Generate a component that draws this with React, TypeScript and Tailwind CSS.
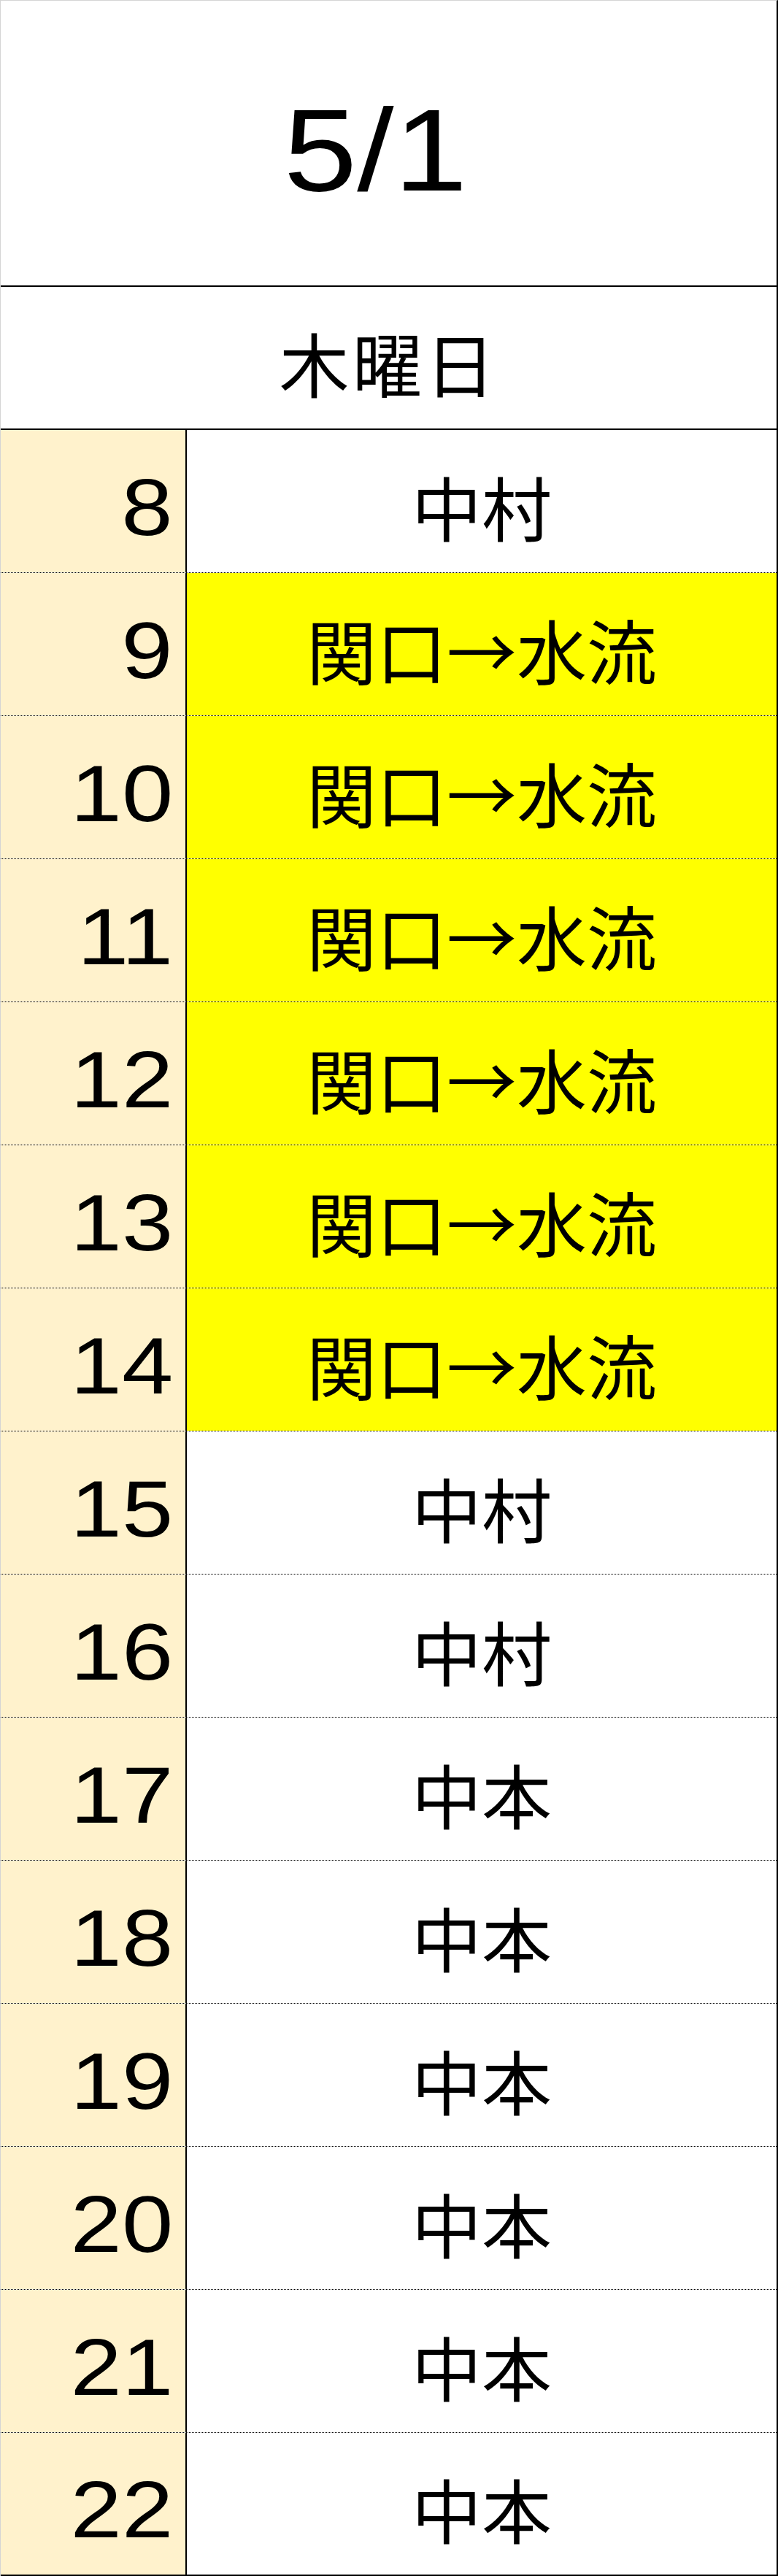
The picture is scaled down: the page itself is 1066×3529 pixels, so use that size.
const rows = [
  { hour: 8, name: '中村', hot: false },
  { hour: 9, name: '関口→水流', hot: true },
  { hour: 10, name: '関口→水流', hot: true },
  { hour: 11, name: '関口→水流', hot: true },
  { hour: 12, name: '関口→水流', hot: true },
  { hour: 13, name: '関口→水流', hot: true },
  { hour: 14, name: '関口→水流', hot: true },
  { hour: 15, name: '中村', hot: false },
  { hour: 16, name: '中村', hot: false },
  { hour: 17, name: '中本', hot: false },
  { hour: 18, name: '中本', hot: false },
  { hour: 19, name: '中本', hot: false },
  { hour: 20, name: '中本', hot: false },
  { hour: 21, name: '中本', hot: false },
  { hour: 22, name: '中本', hot: false },
];

export default function App() {
  return (
    <div className="h-[3529px] w-[1066px] bg-white text-black">
      <div className="flex h-full flex-col border-t border-l border-[#d4d4d4] border-r-2 border-r-black">
        {/* date */}
        <div className="flex h-[392px] shrink-0 items-center justify-center border-b-2 border-black pt-[20px] pr-[36px]">
          <span className="inline-block scale-x-[1.14] font-['Liberation_Sans',sans-serif] text-[159px] leading-none">
            5/1
          </span>
        </div>

        {/* weekday */}
        <div className="flex h-[196px] shrink-0 items-center justify-center border-b-2 border-black pt-[12px]">
          <span className="font-['Noto_Sans_CJK_JP',sans-serif] text-[96px] leading-none tracking-[4px]">
            木曜日
          </span>
        </div>

        {/* hours */}
        {rows.map((r, i) => (
          <div
            key={r.hour}
            className={`grid h-[196px] shrink-0 grid-cols-[255px_1fr] ${
              i === rows.length - 1 ? 'border-b-2 border-solid border-black' : 'border-b border-dotted border-black'
            }`}
          >
            <div className="flex items-center justify-end border-r-2 border-black bg-[#fff2cc] pt-[17px] pr-[17px]">
              <span className="inline-block origin-right scale-x-[1.16] font-['Liberation_Sans',sans-serif] text-[109px] leading-none">
                {r.hour}
              </span>
            </div>
            <div className={`flex items-center justify-center pt-[12px] ${r.hot ? 'bg-[#ffff00]' : 'bg-white'}`}>
              <span className="font-['Noto_Sans_CJK_JP',sans-serif] text-[96px] leading-none">{r.name}</span>
            </div>
          </div>
        ))}
      </div>
    </div>
  );
}
